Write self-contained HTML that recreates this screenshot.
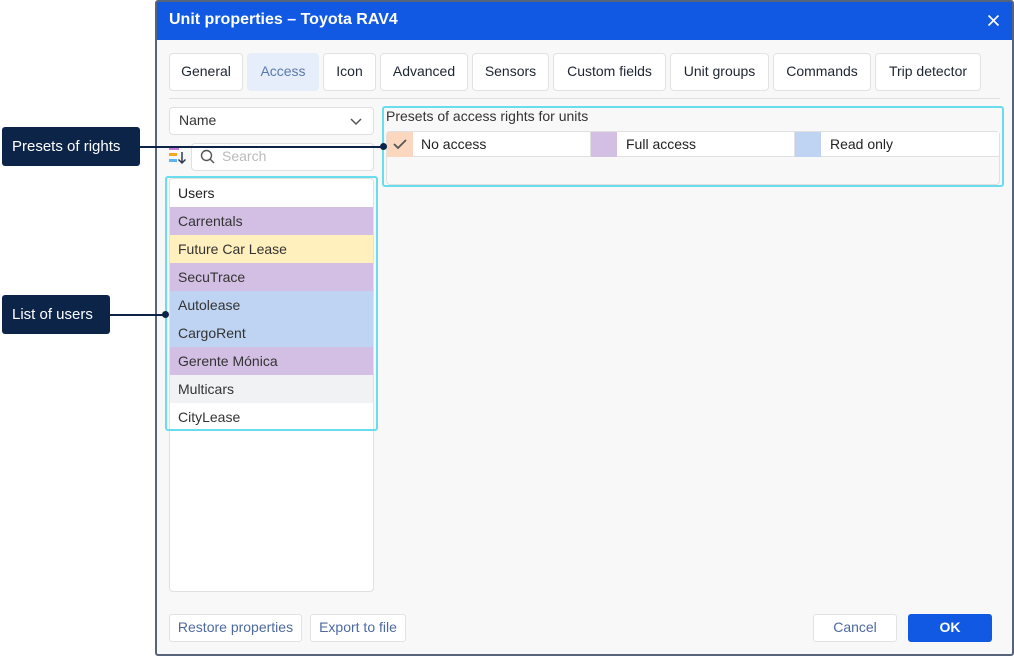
<!DOCTYPE html>
<html><head><meta charset="utf-8"><style>
*{box-sizing:border-box;margin:0;padding:0}
body{width:1014px;height:656px;background:#fff;font-family:"Liberation Sans",sans-serif;position:relative;overflow:hidden;color:#222}
.a{position:absolute}
.dlg{left:155px;top:0;width:859px;height:656px;border:2px solid #56657c;border-radius:3px;background:#f8f8f8}
.hdr{left:157px;top:2px;width:855px;height:38px;background:#1159e3;color:#fff;font-size:16px;font-weight:bold;line-height:36px;padding-left:12px}
.tab{top:53px;height:38px;border:1px solid #e2e2e2;border-radius:4px;background:#fff;font-size:14px;line-height:34px;text-align:center;color:#1d2533}
.box{background:#fff;border:1px solid #e0e0e0;border-radius:4px}
.cy{border:2px solid #69dced;border-radius:3px}
.row{left:170px;width:203px;height:28px;font-size:14px;line-height:28px;padding-left:8px;color:#333}
.btn{top:614px;height:28px;border:1px solid #e2e2e2;border-radius:3px;background:#fff;color:#4d6aa0;font-size:14px;line-height:25px;text-align:center}
.call{background:#0b2448;color:#fff;font-size:15px;border-radius:3px;line-height:40px;padding-left:10px}
.ln{height:2px;background:#0b2448}
.dot{width:7px;height:7px;border-radius:50%;background:#0b2448}
.cell{top:132px;height:25px;font-size:14px;line-height:25px}
</style></head><body>
<div class="a dlg"></div>
<div class="a hdr">Unit properties – Toyota RAV4</div>
<svg class="a" style="left:987px;top:14px" width="13" height="13"><path d="M1.5 1.5l10 10M11.5 1.5l-10 10" stroke="#fff" stroke-width="1.6"/></svg>

<div class="a tab" style="left:169px;width:74px">General</div>
<div class="a tab" style="left:247px;width:72px;background:#e6eefb;border-color:#e6eefb;color:#5a78ad">Access</div>
<div class="a tab" style="left:323px;width:53px">Icon</div>
<div class="a tab" style="left:380px;width:88px">Advanced</div>
<div class="a tab" style="left:472px;width:77px">Sensors</div>
<div class="a tab" style="left:553px;width:113px">Custom fields</div>
<div class="a tab" style="left:670px;width:99px">Unit groups</div>
<div class="a tab" style="left:773px;width:98px">Commands</div>
<div class="a tab" style="left:875px;width:106px">Trip detector</div>
<div class="a" style="left:169px;top:98px;width:831px;height:1px;background:#e0e0e0"></div>

<div class="a box" style="left:169px;top:107px;width:205px;height:28px;font-size:14px;line-height:25px;padding-left:9px;color:#333">Name</div>
<svg class="a" style="left:349px;top:115px" width="14" height="12"><path d="M2 4l5 5 5-5" stroke="#555" stroke-width="1.5" fill="none"/></svg>
<div class="a" style="left:169px;top:147px;width:10px;height:3px;background:#c77ad8"></div>
<div class="a" style="left:169px;top:153px;width:8px;height:3px;background:#f5a623"></div>
<div class="a" style="left:169px;top:159px;width:8px;height:3px;background:#5fb3f5"></div>
<svg class="a" style="left:177px;top:151px" width="10" height="14"><path d="M5 1v11M1.5 8.5L5 12l3.5-3.5" stroke="#2a3b55" stroke-width="1.5" fill="none"/></svg>
<div class="a box" style="left:191px;top:143px;width:183px;height:28px"></div>
<svg class="a" style="left:200px;top:149px" width="16" height="16"><circle cx="6.5" cy="6.5" r="5" stroke="#555" stroke-width="1.4" fill="none"/><path d="M10 10l4 4" stroke="#555" stroke-width="1.4"/></svg>
<div class="a" style="left:222px;top:148px;font-size:14px;color:#bbb">Search</div>

<div class="a box" style="left:169px;top:178px;width:205px;height:414px"></div>
<div class="a row" style="top:179px;color:#222">Users</div>
<div class="a row" style="top:207px;background:#d3bfe4">Carrentals</div>
<div class="a row" style="top:235px;background:#fff0bd">Future Car Lease</div>
<div class="a row" style="top:263px;background:#d3bfe4">SecuTrace</div>
<div class="a row" style="top:291px;background:#bfd4f2">Autolease</div>
<div class="a row" style="top:319px;background:#bfd4f2">CargoRent</div>
<div class="a row" style="top:347px;background:#d3bfe4">Gerente Mónica</div>
<div class="a row" style="top:375px;background:#f1f2f4">Multicars</div>
<div class="a row" style="top:403px">CityLease</div>
<div class="a cy" style="left:165px;top:176px;width:213px;height:255px"></div>

<div class="a" style="left:386px;top:108px;font-size:14px;color:#333">Presets of access rights for units</div>
<div class="a box" style="left:386px;top:131px;width:614px;height:54px;background:#f8f8f8"></div>
<div class="a" style="left:387px;top:132px;width:612px;height:25px;background:#fff;border-bottom:1px solid #e0e0e0"></div>
<div class="a cell" style="left:387px;width:26px;background:#fbd7c0"></div>
<svg class="a" style="left:392px;top:137px" width="16" height="14"><path d="M2 7l4 4 8-8" stroke="#555" stroke-width="1.8" fill="none"/></svg>
<div class="a cell" style="left:421px">No access</div>
<div class="a cell" style="left:590px;width:1px;background:#e0e0e0"></div>
<div class="a cell" style="left:591px;width:26px;background:#d3bfe4"></div>
<div class="a cell" style="left:626px">Full access</div>
<div class="a cell" style="left:794px;width:1px;background:#e0e0e0"></div>
<div class="a cell" style="left:795px;width:26px;background:#bfd4f2"></div>
<div class="a cell" style="left:830px">Read only</div>
<div class="a cy" style="left:382px;top:106px;width:622px;height:81px"></div>

<div class="a btn" style="left:169px;width:133px">Restore properties</div>
<div class="a btn" style="left:310px;width:96px">Export to file</div>
<div class="a btn" style="left:813px;width:84px">Cancel</div>
<div class="a btn" style="left:908px;width:84px;background:#1159e3;border-color:#1159e3;color:#fff;font-weight:bold">OK</div>

<div class="a call" style="left:2px;top:127px;width:138px;height:39px">Presets of rights</div>
<div class="a ln" style="left:140px;top:146px;width:244px"></div>
<div class="a dot" style="left:380px;top:143px"></div>
<div class="a call" style="left:2px;top:295px;width:108px;height:39px">List of users</div>
<div class="a ln" style="left:110px;top:314px;width:55px"></div>
<div class="a dot" style="left:162px;top:311px"></div>
</body></html>
